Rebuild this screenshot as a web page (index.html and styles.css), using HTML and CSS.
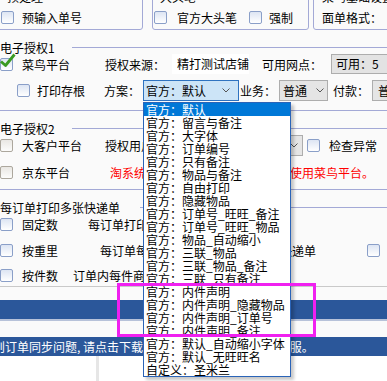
FILE: index.html
```html
<!DOCTYPE html>
<html lang="zh">
<head>
<meta charset="utf-8">
<link rel="stylesheet" href="styles.css">
</head>
<body>
<div class="page">
  <div class="groups">
    <div class="grp g1">
      <div class="legend">预处理</div>
      <div class="grow">
        <span class="cb"><span class="box"></span><span class="lbl">预输入单号</span></span>
      </div>
    </div>
    <div class="grp g2">
      <div class="legend">大头笔</div>
      <div class="grow">
        <span class="cb"><span class="box"></span><span class="lbl l10">官方大头笔</span></span>
        <span class="cb cb-strong"><span class="box"></span><span class="lbl l7">强制</span></span>
      </div>
    </div>
    <div class="grp g3">
      <div class="legend">菜鸟基础设置</div>
      <div class="grow">面单格式：</div>
    </div>
  </div>

  <div class="head hd1"><span class="htxt">电子授权1</span><span class="rule r1"></span></div>

  <div class="row row2">
    <span class="cb"><span class="box"></span>
      <svg class="tick" viewBox="0 0 17 15" width="17" height="15"><polyline points="2,8.5 6.5,12.5 15.5,1.5" fill="none" stroke="#3a9a22" stroke-width="2.8" stroke-linejoin="round"/></svg>
      <span class="lbl l9">菜鸟平台</span></span>
    <span class="t-src">授权来源：</span>
    <span class="tbox">精打测试店铺</span>
    <span class="t-net">可用网点：</span>
    <span class="gbox">可用：5</span>
  </div>

  <div class="row row3">
    <span class="cb cb-print"><span class="box"></span><span class="lbl l7">打印存根</span></span>
    <span class="t-plan">方案：</span>
    <span class="combo combo-plan">官方：默认<svg class="chev" viewBox="0 0 8 5" width="8" height="5"><polyline points="0.5,0.5 4,4 7.5,0.5" fill="none" stroke="#555" stroke-width="1"/></svg></span>
    <span class="t-biz">业务：</span>
    <span class="combo combo-biz">普通<svg class="chev" viewBox="0 0 8 5" width="8" height="5"><polyline points="0.5,0.5 4,4 7.5,0.5" fill="none" stroke="#555" stroke-width="1"/></svg></span>
    <span class="t-pay">付款：</span>
    <span class="combo combo-pay">普通</span>
  </div>

  <div class="hline h-1"></div>

  <div class="head hd2"><span class="htxt">电子授权2</span><span class="rule r1"></span></div>

  <div class="row row4">
    <span class="cb"><span class="box gray"></span><span class="lbl l9">大客户平台</span></span>
    <span class="t-user">授权用户：</span>
    <span class="combo combo-user"><svg class="chev" viewBox="0 0 8 5" width="8" height="5"><polyline points="0.5,0.5 4,4 7.5,0.5" fill="none" stroke="#555" stroke-width="1"/></svg></span>
    <span class="cb cb-check"><span class="box"></span><span class="lbl l9">检查异常</span></span>
  </div>

  <div class="row row5">
    <span class="cb"><span class="box gray"></span><span class="lbl l9">京东平台</span></span>
    <span class="warn">淘系统订单电子面单已经停用，请使用菜鸟平台。</span>
  </div>

  <div class="hline h-2"></div>

  <div class="head hd3"><span class="htxt">每订单打印多张快递单</span><span class="rule r3"></span></div>

  <div class="row row6">
    <span class="cb"><span class="box"></span><span class="lbl l9">固定数</span></span>
    <span class="t-fixed">每订单打印固定张数</span>
  </div>

  <div class="row row7">
    <span class="cb"><span class="box"></span><span class="lbl l9">按重里</span></span>
    <span class="t-weight">每订单每重量超出部分多打印一张快递单</span>
    <span class="cb cb-right"><span class="box"></span></span>
  </div>

  <div class="row row8">
    <span class="cb"><span class="box"></span><span class="lbl l9">按件数</span></span>
    <span class="t-piece">订单内每件商品打印</span>
  </div>

  <div class="hline-gray"></div>

  <div class="bar bar1"></div>
  <div class="bar-line"></div>
  <div class="bar bar2"><span class="bar-text">则订单同步问题, 请点击下载最新修复程序或联系在线客 服。</span></div>

  <div class="foot"><div class="foot-panel"></div></div>

  <div class="dd">
    <div class="sel">官方：默认</div>
    <div>官方：留言与备注</div>
    <div>官方：大字体</div>
    <div>官方：订单编号</div>
    <div>官方：只有备注</div>
    <div>官方：物品与备注</div>
    <div>官方：自由打印</div>
    <div>官方：隐藏物品</div>
    <div>官方：订单号_旺旺_备注</div>
    <div>官方：订单号_旺旺_物品</div>
    <div>官方：物品_自动缩小</div>
    <div>官方：三联_物品</div>
    <div>官方：三联_物品_备注</div>
    <div>官方：三联_只有备注</div>
    <div>官方：内件声明</div>
    <div>官方：内件声明_隐藏物品</div>
    <div>官方：内件声明_订单号</div>
    <div>官方：内件声明_备注</div>
    <div>官方：默认_自动缩小字体</div>
    <div>官方：默认_无旺旺名</div>
    <div>自定义：圣米兰</div>
  </div>

  <div class="mark"></div>
</div>
</body>
</html>
```

FILE: styles.css
```css
* { box-sizing: border-box; }
html, body { margin: 0; padding: 0; }
body {
  width: 387px;
  height: 381px;
  overflow: hidden;
  background: #fafafa;
  font-family: "Noto Sans CJK SC", "Microsoft YaHei", sans-serif;
  font-size: 12px;
  color: #000;
}
.page { position: relative; width: 387px; height: 381px; overflow: hidden; }

/* top group boxes */
.groups { display: flex; margin-top: -11px; height: 41px; }
.grp { border: 1px solid #a3a9d6; border-radius: 3px; height: 41px; flex: none; }
.g1 { margin-left: -3px; width: 146px; }
.g2 { margin-left: 9px; width: 157px; }
.g3 { margin-left: 4px; width: 100px; }
.legend { height: 14px; line-height: 14px; white-space: nowrap; }
.g1 .legend { padding-left: 9px; }
.g2 .legend { padding-left: 7px; }
.g3 .legend { padding-left: 8px; }
.grow { display: flex; align-items: center; height: 20px; margin-top: 3px; white-space: nowrap; }
.g1 .grow { padding-left: 3px; }
.g2 .grow { padding-left: 1px; }
.g3 .grow { padding-left: 8px; }
.cb-strong { margin-left: 12px; }

/* checkbox */
.cb { display: flex; align-items: center; flex: none; position: relative; }
.box {
  width: 13px; height: 13px; flex: none;
  border: 1px solid #8a9fc8; border-radius: 2px;
  background: linear-gradient(#dde5f3, #ffffff);
}
.box.gray { border-color: #aca79d; background: linear-gradient(#e9e7e3, #fcfcfb); }
.lbl { margin-left: 8px; }
.l7 { margin-left: 7px; }
.l9 { margin-left: 9px; }
.l10 { margin-left: 10px; }
.tick { position: absolute; left: -1px; top: -3px; }

/* section headers */
.head { display: flex; align-items: center; height: 14px; white-space: nowrap; }
.head .rule { flex: 1; height: 1px; background: #a3a9d6; }
.r1 { margin-left: 17px; }
.r3 { margin-left: 20px; }
.hd1 { margin-top: 10px; }
.hd2 { margin-top: 10px; }
.hd3 { margin-top: 10px; }
.hline { height: 1px; background: #a3a9d6; }
.h-1 { margin-top: 9px; }
.h-2 { margin-top: 7px; }
.hline-gray { height: 1px; background: #c9c9c9; margin-top: 1px; }

/* rows */
.row { display: flex; align-items: center; white-space: nowrap; }
.row2 { height: 20px; }
.t-src { margin-left: 35px; }
.tbox { margin-left: 7px; width: 88px; height: 20px; line-height: 20px; background: #fff; padding-left: 5px; }
.t-net { margin-left: 13px; }
.gbox { margin-left: 9px; width: 60px; height: 20px; line-height: 18px; border: 1px solid #adadad; background: #e3e3e3; padding-left: 4px; flex: none; }

.row3 { height: 21px; margin-top: 6px; }
.cb-print { margin-left: 17px; }
.t-plan { margin-left: 19px; }
.combo {
  display: flex; align-items: center; flex: none;
  height: 21px; border: 1px solid #adadad; background: #e5e5e5;
  padding-left: 3px;
}
.combo .chev { margin-left: auto; }
.combo-plan { margin-left: 3px; width: 96px; background: #cce4f7; border-color: #2f73c0; padding-left: 2px; }
.combo-plan .chev { margin-right: 8px; }
.t-biz { margin-left: 1px; }
.combo-biz { margin-left: 3px; width: 49px; }
.combo-biz .chev { margin-right: 3px; }
.t-pay { margin-left: 5px; }
.combo-pay { margin-left: 3px; width: 40px; padding-left: 5px; }

.row4 { height: 21px; }
.t-user { margin-left: 23px; }
.combo-user { margin-left: 17px; width: 121px; }
.combo-user .chev { margin-right: 4px; }
.cb-check { margin-left: 4px; }

.row5 { height: 20px; margin-top: 6px; }
.warn { margin-left: 40px; color: #ff0000; }

.row6 { height: 20px; }
.t-fixed { margin-left: 30px; }
.row7 { height: 20px; margin-top: 6px; }
.t-weight { margin-left: 42px; }
.cb-right { margin-left: 51px; }
.row8 { height: 20px; margin-top: 5px; }
.t-piece { margin-left: 15px; }

/* bottom bars */
.bar { background: #2b579a; height: 19px; }
.bar1 { margin-top: 13px; }
.bar-line { height: 2px; background: #b7c2d9; }
.bar2 { margin-top: 16px; display: flex; align-items: center; color: #fff; white-space: nowrap; }
.bar-text { margin-left: -7px; }
.foot { height: 30px; background: #fff; }
.foot-panel { width: 99px; height: 30px; border-right: 3px solid #e6e6e6; }

/* open dropdown list */
.dd {
  position: absolute; left: 143px; top: 102px; width: 148px;
  border: 1px solid #2a64b8; background: #fff;
  box-shadow: 3px 3px 3px rgba(0, 0, 0, 0.22);
}
.dd div { height: 13px; line-height: 13px; padding-left: 2px; white-space: nowrap; }
.dd .sel { background: #0078d7; color: #fff; }

/* annotation */
.mark { position: absolute; left: 117px; top: 283px; width: 199px; height: 54px; border: 3px solid #f020f0; }
```
